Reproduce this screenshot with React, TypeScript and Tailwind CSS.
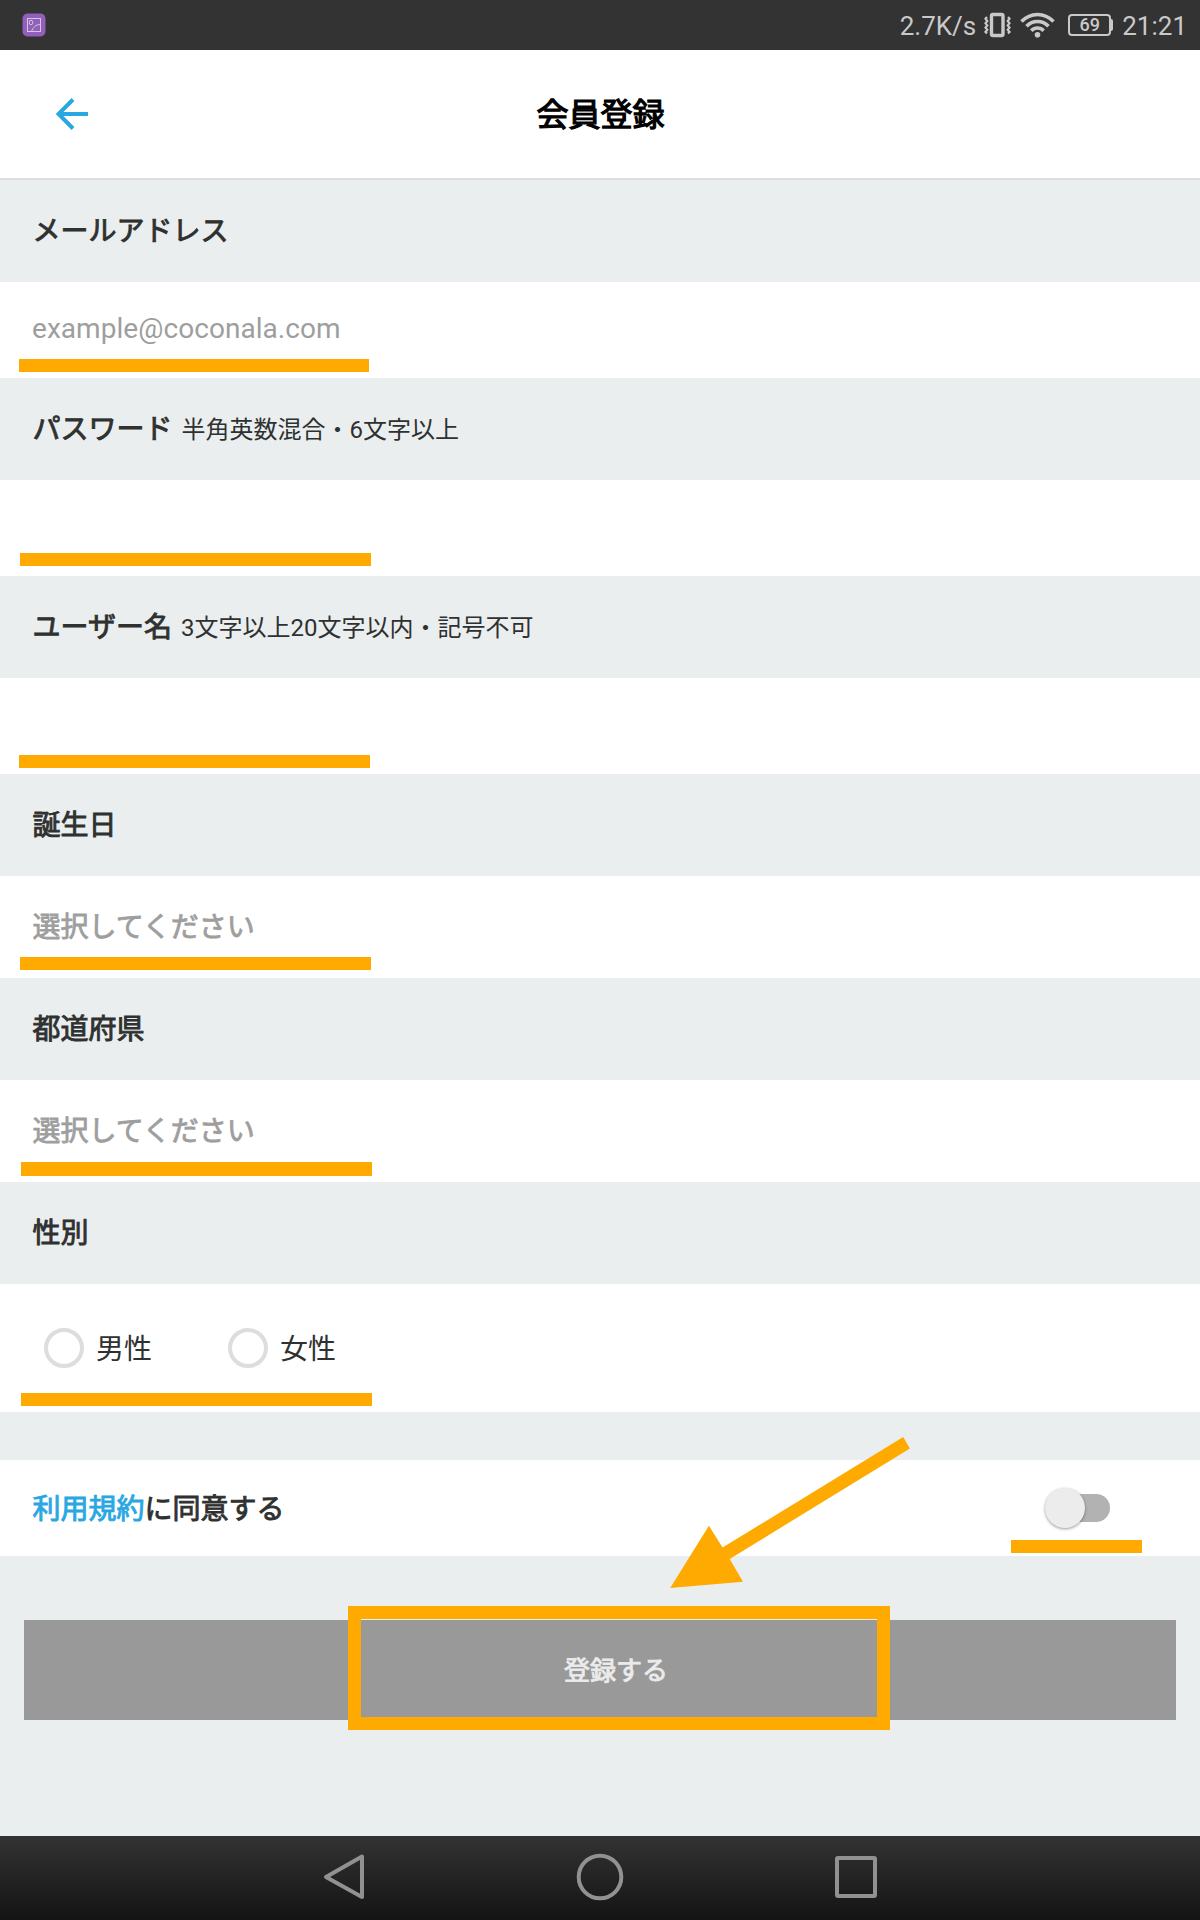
import React from "react";

type SectionHeaderProps = {
  title: string;
  hint?: string;
};

const SectionHeader = ({ title, hint }: SectionHeaderProps) => (
  <div className="flex h-[102px] items-center px-8 pt-[2px] text-[#2f3130]">
    <h2 className="pl-[0.5px] text-[28px] leading-none [-webkit-text-stroke:0.9px]">{title}</h2>
    {hint && <span className="ml-[9px] text-2xl leading-none">{hint}</span>}
  </div>
);

type MarkerProps = {
  className: string;
};

// Orange underline laid over a row
const Marker = ({ className }: MarkerProps) => (
  <div className={`absolute bg-[#ffaa00] ${className}`} />
);

const StatusBar = () => (
  <div className="flex h-[50px] items-center bg-[#333333] pr-[13px] pl-[22px] text-[26px] leading-none text-[#c9c9c9]">
    <svg width="24" height="24" viewBox="0 0 24 24" fill="none">
      <rect x="0.5" y="0.5" width="23" height="23" rx="5" fill="#935fbc" />
      <g stroke="#d5c6dc" strokeWidth="1">
        <rect x="5.5" y="5.5" width="13" height="13" />
        <ellipse cx="9" cy="9.500" rx="1.800" ry="2.200" />
        <path d="M9.500 18.500C11 14.500 13.500 11.500 18.500 11.500" />
      </g>
    </svg>
    <span className="ml-auto pt-[2px]">2.7K/s</span>
    <svg className="ml-2" width="27" height="26" viewBox="0 0 27 26" fill="none" stroke="#c9c9c9">
      <rect x="7.500" y="2.500" width="11.500" height="21" rx="1.500" strokeWidth="3.400" />
      <path
        d="M3 5l-1.500 1.800 1.800 2.200-1.800 2.200 1.800 2.200-1.800 2.200 1.800 2.200-1.800 2.200 1.500 1.500M24 5l1.500 1.800-1.800 2.200 1.800 2.200-1.800 2.200 1.800 2.200-1.800 2.200 1.800 2.200-1.500 1.500"
        strokeWidth="2.200"
      />
    </svg>
    <svg className="ml-[9px]" width="35" height="26" viewBox="0 0 35 26" fill="none" stroke="#c9c9c9" strokeWidth="3.500">
      <path d="M1.500 9.500C10.500 0 24.500 0 33.500 9.500" />
      <path d="M6.500 14.200C12.500 7.800 22.500 7.800 28.500 14.200" />
      <path d="M11.300 18.800C14.800 15.200 20.200 15.200 23.700 18.800" />
      <circle cx="17.500" cy="22.800" r="2.800" fill="#c9c9c9" stroke="none" />
    </svg>
    <div className="ml-[13px] flex items-center">
      <div className="flex h-[22px] w-[43px] items-center justify-center rounded-[4px] border-2 border-[#c9c9c9] text-[18px] font-medium">
        69
      </div>
      <div className="h-3 w-[2px] rounded-r-sm bg-[#c9c9c9]" />
    </div>
    <span className="ml-[9px] pt-[2px]">21:21</span>
  </div>
);

const Header = () => (
  <header className="relative flex h-[130px] items-center justify-center border-b-2 border-[#dddddd] bg-white pt-[2px] pl-px">
    <button className="absolute top-[48px] left-14" aria-label="戻る">
      <svg width="32" height="32" viewBox="0 0 32 32" fill="none" stroke="#29a7e1" strokeWidth="4">
        <path d="M32 16H3M17 1.500L2.500 16L17 30.500" />
      </svg>
    </button>
    <h1 className="text-[32px] leading-none text-black [-webkit-text-stroke:1.2px]">会員登録</h1>
  </header>
);

const Radio = ({ label }: { label: string }) => (
  <label className="flex items-center gap-3 text-[28px] leading-none text-[#2f3130]">
    <span className="h-10 w-10 rounded-full border-4 border-[#dddddd]" />
    <span className="pt-[3px]">{label}</span>
  </label>
);

const NavBar = () => (
  <nav className="h-[84px] bg-linear-to-b from-[#333333] to-[#141414]">
    <svg width="1200" height="84" fill="none" stroke="#919191" strokeWidth="4" strokeLinejoin="round">
      <path d="M362 20.500V61L326 41Z" />
      <circle cx="600" cy="41" r="21.300" />
      <rect x="837" y="22" width="38" height="38" rx="1" />
    </svg>
  </nav>
);

const App = () => {
  return (
    <div className="flex h-[1920px] w-[1200px] flex-col overflow-hidden bg-[#eaeeef] font-['Roboto','Noto_Sans_CJK_JP',sans-serif]">
      <StatusBar />
      <Header />

      <main className="grow">
        <SectionHeader title="メールアドレス" />
        <div className="relative flex h-24 items-center bg-white px-8 pb-[2px] text-[28px] leading-none tracking-[0.05px] text-[#9e9e9e]">
          example@coconala.com
          <Marker className="top-[77px] left-[19px] h-[13px] w-[350px]" />
        </div>

        <SectionHeader title="パスワード" hint="半角英数混合・6文字以上" />
        <div className="relative h-24 bg-white">
          <Marker className="top-[73px] left-[19.500px] h-[13.300px] w-[351px]" />
        </div>

        <SectionHeader title="ユーザー名" hint="3文字以上20文字以内・記号不可" />
        <div className="relative h-24 bg-white">
          <Marker className="top-[76.500px] left-[19px] h-[13.300px] w-[351px]" />
        </div>

        <SectionHeader title="誕生日" />
        <div className="relative flex h-[102px] items-center bg-white pt-[2px] pr-8 pl-[32.5px] text-[28px] leading-none text-[#9e9e9e] [-webkit-text-stroke:0.8px]">
          選択してください
          <Marker className="top-[81px] left-[20.300px] h-[13.300px] w-[351.200px]" />
        </div>

        <SectionHeader title="都道府県" />
        <div className="relative flex h-[102px] items-center bg-white pt-[2px] pr-8 pl-[32.5px] text-[28px] leading-none text-[#9e9e9e] [-webkit-text-stroke:0.8px]">
          選択してください
          <Marker className="top-[82px] left-[21px] h-[14px] w-[351px]" />
        </div>

        <SectionHeader title="性別" />
        <div className="relative flex h-32 items-center gap-[76px] bg-white px-11">
          <Radio label="男性" />
          <Radio label="女性" />
          <Marker className="top-[109px] left-[21.200px] h-[13px] w-[351.200px]" />
        </div>

        <div className="relative mt-12 flex h-24 items-center bg-white px-8 text-[28px] leading-none text-[#2f3130]">
          <p className="pt-[3px] pl-[0.5px] [-webkit-text-stroke:0.9px]">
            <a className="text-[#29a7e1]">利用規約</a>
            に同意する
          </p>
          <div className="relative mr-[58px] ml-auto h-7 w-14 rounded-full bg-[#b2b2b2]">
            <div className="absolute -top-[6px] -left-[9px] h-10 w-10 rounded-full bg-[#ececec] shadow-[0_1px_3px_rgba(0,0,0,0.4)]" />
          </div>
          <Marker className="top-[79.500px] left-[1011px] h-[13.300px] w-[131px]" />
        </div>

        <div className="relative mx-6 mt-16">
          <button className="flex h-[100px] w-full items-center justify-center bg-[#999999] pt-[2px] pl-[32px] text-[26px] leading-none text-[#ebebeb] [-webkit-text-stroke:0.9px]">
            登録する
          </button>
          <div className="absolute -top-[14px] left-[323.5px] h-[124px] w-[542px] border-[13px] border-[#ffaa00]" />
          {/* Arrow towards the submit button */}
          <svg className="absolute -top-[190px] left-[640px]" width="260" height="170" fill="#ffaa00">
            <path d="M6.200 158L44.900 95.700L58.600 117.500L239.200 7L245.900 18.400L65.700 129L79 151.700Z" />
          </svg>
        </div>
      </main>

      <NavBar />
    </div>
  );
};

export default App;
